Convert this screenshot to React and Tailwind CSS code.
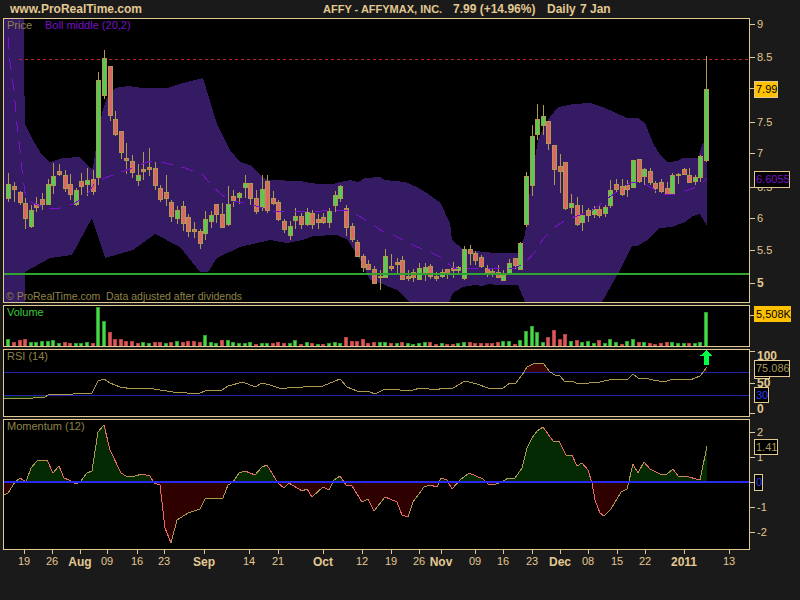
// AFFY daily chart, plotted in page pixel coordinates
const candles = [
  [184,198,173,202,1],[186,189,182,202,0],[192,202,191,205,0],[203,218,198,229,0],[210,226,205,228,1],[204,207,197,212,0],[199,204,193,210,0],[184,204,179,205,1],
  [176,185,163,194,1],[171,174,164,176,0],[175,188,170,192,0],[184,194,174,200,0],[190,204,188,206,1],[181,186,173,195,0],[180,184,168,196,1],[179,191,170,195,0],
  [80,177,72,185,1],[58,95,50,99,1],[66,115,66,121,0],[119,134,111,136,0],[131,152,131,159,0],[158,160,143,174,0],[161,172,155,178,0],[175,180,164,186,1],
  [169,171,152,180,0],[167,169,148,176,0],[168,185,162,190,0],[188,199,185,202,0],[192,198,175,206,0],[202,216,200,222,0],[210,218,206,224,1],[206,223,201,231,0],
  [217,231,214,237,0],[229,231,222,238,0],[231,243,229,249,0],[219,233,211,240,1],[215,221,211,228,1],[204,214,204,223,0],[214,227,203,227,0],[204,224,186,226,1],
  [196,200,190,207,0],[193,197,192,204,1],[183,187,175,198,1],[183,198,183,205,0],[198,211,190,214,0],[189,207,175,211,1],[181,210,175,213,0],
  [198,203,191,205,0],[202,219,200,221,0],[221,229,219,233,0],[226,235,221,240,1],[216,220,208,229,1],[216,224,213,229,0],[212,224,208,226,1],[213,224,210,229,0],
  [219,222,214,229,0],[217,222,213,224,0],[211,222,208,228,1],[195,205,191,212,1],[186,198,185,202,1],[208,227,205,236,0],[226,239,223,242,0],[242,256,240,257,0],
  [256,267,254,272,0],[264,269,260,270,0],[269,283,266,284,0],[276,277,270,290,0],[256,277,249,277,1],[266,268,254,271,0],[262,264,258,273,0],[260,279,256,280,0],
  [276,278,270,281,0],[272,277,269,282,0],[268,279,263,280,1],[267,272,263,281,1],[266,276,264,279,0],[276,278,272,281,0],[272,276,269,278,1],[269,273,269,279,0],
  [268,270,262,278,0],[267,270,266,274,1],[249,278,246,280,1],[249,253,245,265,0],[253,260,251,265,0],[257,266,255,268,0],[268,272,265,277,0],[271,274,269,277,0],
  [272,277,265,278,0],[275,280,270,281,1],[263,273,259,275,1],[258,265,258,269,0],[243,269,242,270,1],[176,224,172,227,1],[136,185,125,196,1],[119,134,104,140,1],
  [116,125,105,135,1],[121,143,121,150,0],[145,169,145,185,0],[166,171,154,193,0],[162,208,162,210,0],[203,207,194,214,1],[205,224,197,226,0],[215,222,205,231,1],
  [210,215,208,222,0],[209,214,206,218,1],[209,215,206,218,0],[207,213,205,217,1],[190,205,180,208,1],[184,189,179,192,0],[186,194,179,196,0],[185,189,180,197,0],
  [160,187,160,188,1],[159,181,159,183,0],[169,176,168,185,1],[171,182,168,185,0],[183,188,181,193,0],[182,191,179,193,0],[188,194,182,195,0],[175,193,173,194,1],
  [174,175,173,184,0],[169,174,168,175,0],[175,182,168,183,0],[177,181,175,185,1],[156,177,155,182,1],[89,160,56,162,1],
];

// negative = down day
const volumes = [
  7,-4,-6,-7,4,4,5,5,6,3,-4,-3,3,3,4,-3,39,25,-14,-7,-7,-5,-5,-3,4,3,-4,-4,3,-4,5,-4,-5,-5,-4,11,4,3,-6,6,4,3,3,4,-2,3,3,
  -3,-4,-3,3,6,-2,4,-3,2,-2,3,4,3,-9,-5,-5,-7,-3,-4,4,4,-3,3,-4,3,2,3,4,-4,-2,3,-2,-2,3,4,-4,-3,-3,-3,-3,-4,5,5,-2,6,15,20,14,
  4,-9,-16,-7,-12,5,-6,4,5,3,-6,3,7,4,-2,5,7,-4,4,-3,-2,-3,-4,4,3,3,-3,3,4,34,
];

const bandTop = [[4,19],[24,19],[24,66],[25,124],[33,140],[42,155],[50,162],[63,158],[80,157],[92,170],[94,162],[96,147],[102,113],[107,98],[115,88],[128,86],[143,88],[167,88],[183,83],[203,78],[217,124],[230,150],[240,162],[250,165],[263,178],[270,180],[300,181],[310,183],[320,184],[333,184],[340,182],[350,180],[358,182],[365,178],[380,177],[385,180],[405,182],[417,187],[427,193],[435,199],[440,202],[450,223],[452,240],[463,249],[483,252],[497,253],[518,253],[525,235],[530,190],[533,170],[538,140],[545,125],[550,117],[558,107],[573,104],[590,103],[603,107],[627,118],[638,118],[645,123],[653,143],[660,155],[668,162],[677,161],[683,158],[698,158],[703,143],[707,143]];
const bandBottom = [[707,226],[700,214],[693,216],[685,222],[672,227],[660,228],[655,232],[648,240],[637,246],[632,246],[620,270],[602,302],[525,302],[518,285],[497,285],[488,284],[483,286],[475,285],[463,287],[453,293],[449,302],[410,302],[397,290],[380,283],[370,280],[360,260],[348,240],[337,235],[313,236],[303,240],[287,243],[270,240],[240,247],[217,258],[208,272],[200,272],[180,247],[155,234],[133,250],[105,258],[92,218],[72,255],[50,258],[25,272],[25,302],[4,302]];
const bollMiddle = [[8,37],[10,62],[14,90],[17,125],[20,150],[22,170],[26,200],[33,203],[48,209],[60,208],[73,204],[85,197],[95,183],[105,178],[118,173],[135,167],[150,161],[165,163],[185,168],[203,175],[213,187],[228,200],[253,205],[273,211],[297,212],[322,211],[348,210],[357,215],[369,222],[382,231],[393,235],[405,241],[417,247],[430,252],[442,258],[453,268],[465,269],[490,268],[513,269],[525,263],[535,252],[543,239],[555,227],[567,219],[580,215],[593,210],[608,198],[630,183],[640,182],[652,188],[663,195],[675,194],[688,190],[699,186],[707,178]];

const rsi = [[4,399],[33,398],[45,397],[50,394],[73,394],[92,393],[98,381],[104,379],[110,383],[120,387],[133,389],[147,388],[160,390],[173,392],[187,393],[198,394],[207,390],[222,390],[228,386],[243,382],[255,387],[262,383],[270,385],[282,389],[293,387],[303,387],[323,386],[340,379],[347,387],[357,391],[370,392],[375,394],[385,389],[397,389],[403,391],[413,390],[420,388],[437,390],[442,388],[453,388],[465,381],[477,384],[488,388],[503,388],[510,383],[515,384],[522,375],[527,367],[535,363],[543,363],[550,372],[555,375],[560,376],[565,382],[572,381],[578,384],[600,382],[613,379],[628,379],[633,374],[638,378],[645,378],[653,380],[665,382],[672,379],[687,379],[690,380],[700,376],[707,367]];

const momentum = [[4,495],[8,493],[15,482],[20,478],[26,482],[31,468],[37,461],[47,460],[53,473],[59,466],[64,478],[69,480],[76,484],[80,482],[87,473],[92,471],[98,432],[104,425],[110,450],[121,473],[126,476],[135,476],[142,474],[150,476],[154,483],[160,485],[165,528],[171,543],[177,520],[188,513],[200,509],[205,499],[223,498],[228,485],[233,482],[239,473],[245,471],[255,475],[262,467],[267,465],[270,470],[278,483],[284,488],[289,483],[302,491],[307,489],[312,497],[323,487],[329,490],[334,480],[340,476],[346,485],[352,486],[362,502],[368,499],[374,511],[385,497],[397,502],[402,515],[408,517],[413,502],[424,487],[430,485],[437,487],[441,478],[447,480],[452,489],[460,480],[469,473],[483,479],[488,484],[493,485],[502,482],[508,478],[515,478],[522,468],[527,448],[532,438],[537,431],[543,427],[553,441],[559,441],[566,455],[572,455],[577,466],[582,463],[588,470],[592,483],[595,500],[600,513],[604,516],[611,509],[621,492],[627,489],[633,464],[638,473],[644,462],[650,469],[660,474],[667,474],[673,469],[678,476],[685,476],[700,480],[707,446]];

const dates = [
  [24,"19"],[52,"26"],[80,"Aug",1],[107,"09"],[137,"16"],[164,"23"],[204,"Sep",1],[249,"14"],[278,"21"],[323,"Oct",1],[362,"12"],[391,"19"],[419,"26"],
  [441,"Nov",1],[475,"09"],[503,"16"],[532,"23"],[560,"Dec",1],[588,"08"],[617,"15"],[645,"22"],[684,"2011",1],[729,"13"],
];

const pts = (list) => list.map((p) => p.join(",")).join(" ");
const candleX = (i) => Math.round(8.3 + 5.627 * i);

function Panel({ top, height, children, overlay }) {
  return (
    <div className="relative w-[747px] border border-[#e2c891] bg-black overflow-hidden" style={{ height }}>
      <svg className="block" width="745" height={height - 2} viewBox={`4 ${top + 1} 745 ${height - 2}`} shapeRendering="crispEdges">
        {children}
      </svg>
      {overlay}
    </div>
  );
}

function Legend({ className, children }) {
  return <span className={`absolute whitespace-pre leading-none ${className}`}>{children}</span>;
}

function Tick({ y, label, bold }) {
  return (
    <>
      <div className="absolute left-0 w-[5px] h-px bg-[#e2c891]" style={{ top: y }} />
      {label && (
        <span className={`absolute left-[7px] -translate-y-1/2 leading-none text-[#e2c891] ${bold ? "font-bold text-[12px]" : "text-[11px]"}`} style={{ top: y }}>
          {label}
        </span>
      )}
    </>
  );
}

function Badge({ y, h = 16, w, className, children }) {
  return (
    <div
      className={`absolute left-[4px] flex items-center pl-px border border-[#e2c891] text-[11px] leading-none whitespace-nowrap ${className}`}
      style={{ top: y, height: h, width: w }}
    >
      {children}
    </div>
  );
}

function Row({ children, axis }) {
  return (
    <div className="flex">
      {children}
      <div className="relative w-[50px]">{axis}</div>
    </div>
  );
}

export default function App() {
  return (
    <div className="w-[800px] h-[600px] overflow-hidden bg-[#1a1a1a] font-['Liberation_Sans',Arial,sans-serif]">
      <header className="h-[18px] flex items-center pl-[10px] font-bold text-[#e2c891] text-[12px] leading-none">
        <span className="w-[313px]">www.ProRealTime.com</span>
        <span className="w-[130px] text-[11px]">AFFY - AFFYMAX, INC.</span>
        <span className="w-[94px]">7.99 (+14.96%)</span>
        <span className="w-[33px]">Daily</span>
        <span>7 Jan</span>
      </header>

      <main className="pl-[3px] flex flex-col gap-[2px]">
        <Row
          axis={
            <>
              <Tick y={6} label="9" />
              <Tick y={39} label="8.5" />
              <Tick y={70} />
              <Tick y={104} label="7.5" />
              <Tick y={135} label="7" />
              <Tick y={169} label="6.5" />
              <Tick y={200} label="6" />
              <Tick y={232} label="5.5" />
              <Tick y={265} label="5" bold />
              <Badge y={63} w={24} h={17} className="bg-[#ffc000] text-black">7.99</Badge>
              <Badge y={153} w={36} h={17} className="bg-black text-[#7a10c8]">6.6055</Badge>
            </>
          }
        >
          <Panel
            top={18}
            height={285}
            overlay={
              <>
                <Legend className="left-[3px] top-[1px] text-[11px] text-[#8f8347]">Price</Legend>
                <Legend className="left-[41px] top-[1px] text-[11px] text-[#7a10c8]">Boll middle (20,2)</Legend>
                <Legend className="left-[2px] bottom-[1px] text-[10.5px] text-[#8f8347]">© ProRealTime.com  Data adjusted after dividends</Legend>
              </>
            }
          >
            <polygon points={pts([...bandTop, ...bandBottom])} fill="#351b63" />
            <line x1="19" y1="59.5" x2="749" y2="59.5" stroke="#c02525" strokeDasharray="3 3" />
            {candles.map(([t, b, wt, wb, up], i) => {
              const x = candleX(i);
              return (
                <g key={i}>
                  <line x1={x + 0.5} y1={wt} x2={x + 0.5} y2={wb} stroke="#ad9a4c" />
                  <rect x={x - 1.5} y={t + 0.5} width="4" height={b - t} fill={up ? "#55cc55" : "#dd6666"} stroke="#ad9a4c" />
                </g>
              );
            })}
            <polyline points={pts(bollMiddle)} fill="none" stroke="#7a10c8" strokeDasharray="12 9" />
            <rect x="4" y="273" width="745" height="2" fill="#2fa52f" />
          </Panel>
        </Row>

        <Row
          axis={
            <>
              <Tick y={10} />
              <Badge y={1} w={37} h={16} className="bg-[#ffc000] border-[#ffc000] text-black">5,508K</Badge>
            </>
          }
        >
          <Panel
            top={305}
            height={42}
            overlay={<Legend className="left-[3px] top-[1px] text-[11px] text-[#39c939]">Volume</Legend>}
          >
            {volumes.map((v, i) => {
              const h = Math.abs(v);
              return (
                <rect
                  key={i}
                  x={candleX(i) - 1.5}
                  y={346 - h + 0.5}
                  width="3"
                  height={h}
                  fill={v > 0 ? "#4fd44f" : "#d85a5a"}
                  stroke={v > 0 ? "#28a028" : "#b84040"}
                />
              );
            })}
          </Panel>
        </Row>

        <Row
          axis={
            <>
              <Tick y={2} />
              <span className="absolute left-[7px] top-[1px] text-[12px] leading-none font-bold text-[#e2c891]">100</span>
              <Tick y={34} label="50" bold />
              <Tick y={64} />
              <span className="absolute left-[7px] top-[54px] text-[12px] leading-none font-bold text-[#e2c891]">0</span>
              <div className="absolute left-[4px] top-[27px] w-[16px] h-[3px] border-x border-b border-[#e2c891] bg-black" />
              <Badge y={11} w={36} h={17} className="bg-black text-[#a89a5a]">75.086</Badge>
              <Badge y={38} w={15} h={16} className="bg-black text-[#2a3cf0]">30</Badge>
            </>
          }
        >
          <Panel top={349} height={68} overlay={<Legend className="left-[3px] top-[1px] text-[11px] text-[#8f8347]">RSI (14)</Legend>}>
            <defs>
              <clipPath id="rsi-high"><rect x="4" y="350" width="745" height="22" /></clipPath>
              <clipPath id="rsi-low"><rect x="4" y="395" width="745" height="21" /></clipPath>
            </defs>
            <polygon points={pts([...rsi, [707, 372]])} fill="#3a0505" clipPath="url(#rsi-high)" />
            <polygon points={pts([[4, 395], ...rsi.slice(0, 4), [50, 395]])} fill="#032a03" clipPath="url(#rsi-low)" />
            <line x1="4" y1="372.5" x2="749" y2="372.5" stroke="#2424a8" />
            <line x1="4" y1="395.5" x2="749" y2="395.5" stroke="#2424a8" />
            <polyline points={pts(rsi)} fill="none" stroke="#ad9a4c" />
          </Panel>
        </Row>

        <Row
          axis={
            <>
              <Tick y={13} label="2" />
              <Tick y={38} label="1" />
              <Tick y={63} />
              <Tick y={88} label="-1" />
              <Tick y={113} label="-2" />
              <Badge y={20} w={24} h={16} className="bg-black text-[#a89a5a]">1.41</Badge>
              <Badge y={55} w={9} h={17} className="bg-black text-[#2a3cf0]">0</Badge>
            </>
          }
        >
          <Panel top={419} height={131} overlay={<Legend className="left-[3px] top-[1px] text-[11px] text-[#8f8347]">Momentum (12)</Legend>}>
            <defs>
              <clipPath id="mom-up"><rect x="4" y="420" width="745" height="62" /></clipPath>
              <clipPath id="mom-down"><rect x="4" y="482" width="745" height="67" /></clipPath>
            </defs>
            <polygon points={pts([[4, 482], ...momentum, [707, 482]])} fill="#032a03" clipPath="url(#mom-up)" />
            <polygon points={pts([[4, 482], ...momentum, [707, 482]])} fill="#2e0000" clipPath="url(#mom-down)" />
            {momentum.slice(1).map((p, i) => (
              <line
                key={i}
                x1={momentum[i][0]}
                y1={momentum[i][1]}
                x2={p[0]}
                y2={p[1]}
                stroke={p[1] > momentum[i][1] ? "#e86a6a" : "#ad9a4c"}
              />
            ))}
            <rect x="4" y="481" width="745" height="2" fill="#2a2aee" />
          </Panel>
        </Row>
      </main>

      <div className="relative h-[30px] text-[11px] leading-none text-[#e2c891]">
        {dates.map(([x, label, bold]) => (
          <div key={x} className="contents">
            <div className="absolute top-0 w-px h-[4px] bg-[#e2c891]" style={{ left: x }} />
            <span className={`absolute top-[6px] -translate-x-1/2 ${bold ? "font-bold text-[12px]" : ""}`} style={{ left: x }}>
              {label}
            </span>
          </div>
        ))}
      </div>

      {/* up arrow on the last bar of the RSI pane */}
      <svg className="absolute left-[700px] top-[350px]" width="13" height="15" viewBox="0 0 13 15" shapeRendering="crispEdges">
        <polygon points="6.5,0 12.5,5.5 9,5.5 9,15 4,15 4,5.5 0.5,5.5" fill="#00ff44" />
      </svg>
    </div>
  );
}
